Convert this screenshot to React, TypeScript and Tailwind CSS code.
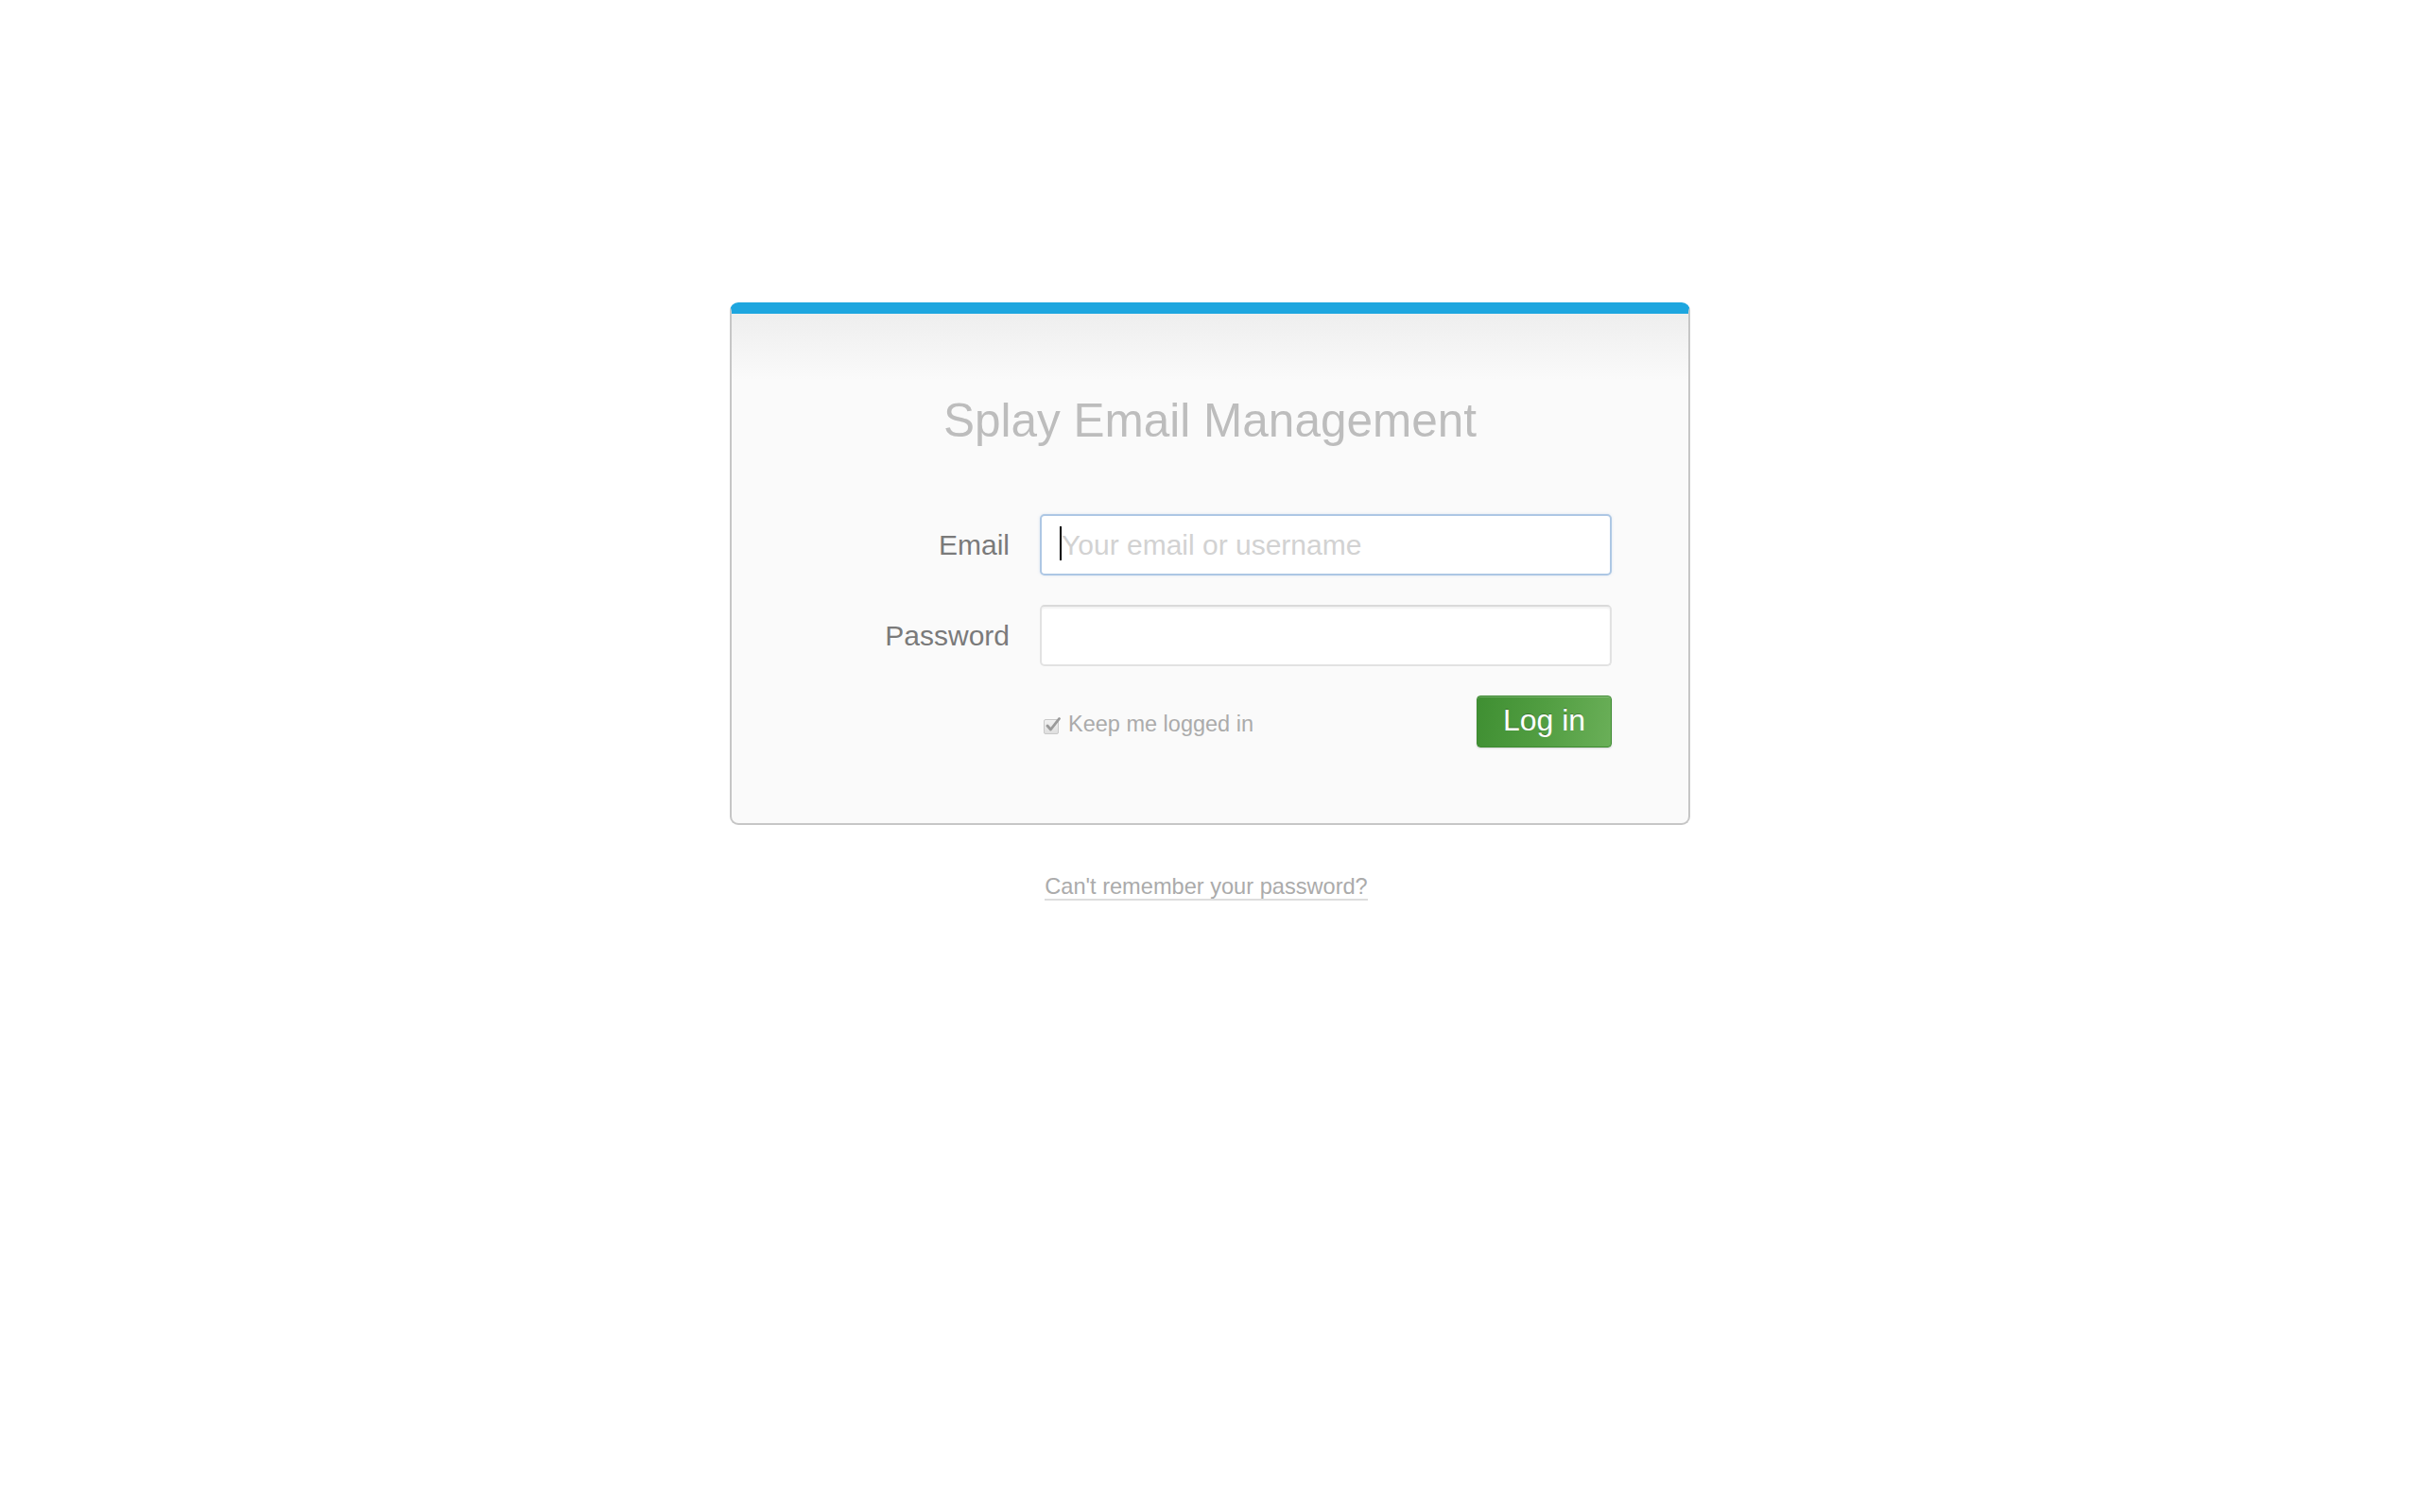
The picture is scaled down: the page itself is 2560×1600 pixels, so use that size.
import React from "react";

export default function App() {
  return (
    <div
      className="min-h-[1600px] w-full bg-white flex flex-col items-center pt-[320px]"
      style={{ fontFamily: '"Liberation Sans", Arial, Helvetica, sans-serif' }}
    >
      <div className="w-[1016px] h-[553px] rounded-[9px] border-2 border-[#c6c6c6] border-t-[12px] border-t-[#1ea6df] bg-[linear-gradient(to_bottom,#eeeeee,#fafafa_70px)] flex flex-col">
        <h1 className="pt-[83px] text-center text-[49.5px] leading-[60px] text-[#bdbdbd] font-normal">
          Splay Email Management
        </h1>

        <div className="mt-[69px] flex flex-col gap-[31px]">
          <div className="flex items-center gap-[32px]">
            <label className="w-[294px] text-right text-[30px] text-[#7a7a7a]">Email</label>
            <div className="relative w-[605px] h-[65px]">
              <input
                type="text"
                placeholder="Your email or username"
                className="w-full h-full rounded-[5px] border-2 border-[#adc7e4] bg-white pl-[21px] pr-3 text-[30px] text-[#555] placeholder:text-[#d2d2d2] outline-none shadow-[0_0_3px_rgba(120,160,210,0.25)]"
              />
              <span className="absolute left-[21px] top-[13px] w-[2px] h-[36px] bg-black" />
            </div>
          </div>

          <div className="flex items-center gap-[32px]">
            <label className="w-[294px] text-right text-[30px] text-[#7a7a7a]">Password</label>
            <input
              type="password"
              className="w-[605px] h-[65px] rounded-[5px] border-2 border-[#e2e2e2] border-t-[#dadada] bg-white px-[21px] text-[30px] outline-none shadow-[inset_0_2px_2px_rgba(0,0,0,0.05)]"
            />
          </div>

          <div className="flex items-center gap-[32px]">
            <div className="w-[294px]" />
            <div className="w-[605px] flex items-center justify-between">
              <label className="flex items-center gap-[5px] pl-[3px] pt-[6px] text-[23.5px] text-[#ababab]">
                <svg width="22" height="22" viewBox="0 0 22 22" className="shrink-0">
                  <defs>
                    <linearGradient id="cb" x1="0" y1="0" x2="0" y2="1">
                      <stop offset="0" stopColor="#f2f2f2" />
                      <stop offset="1" stopColor="#dedede" />
                    </linearGradient>
                  </defs>
                  <rect x="1.5" y="5.5" width="15" height="15" rx="1.5" fill="url(#cb)" stroke="#c9c9c9" />
                  <path d="M5 12 L8.5 16 L17.5 4.5" fill="none" stroke="#9a9a9a" strokeWidth="2.8" strokeLinecap="round" strokeLinejoin="round" />
                </svg>
                <span>Keep me logged in</span>
              </label>
              <button className="w-[143px] h-[55px] rounded-[4px] border border-[#3d8a31] bg-[linear-gradient(100deg,#3f8f32,#529e42_50%,#6aaf58)] text-white text-[32px] leading-none pb-[3px] shadow-[inset_0_1px_0_rgba(255,255,255,0.25),0_1px_2px_rgba(0,0,0,0.15)] [text-shadow:0_-1px_0_rgba(0,0,0,0.25)]">
                Log in
              </button>
            </div>
          </div>
        </div>
      </div>

      <a
        href="#"
        className="mt-[52px] inline-block text-[23.6px] leading-[26px] text-[#ababab] border-b-2 border-[#dddddd] mr-[8px]"
      >
        Can't remember your password?
      </a>
    </div>
  );
}
